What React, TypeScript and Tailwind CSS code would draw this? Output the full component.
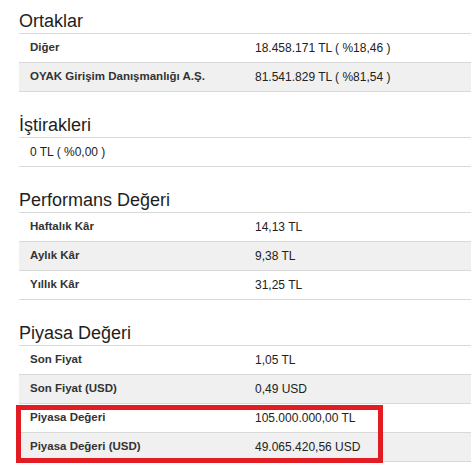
const sections: { title: string; rows: [string, string][]; single?: string }[] = [
  {
    title: 'Ortaklar',
    rows: [
      ['Diğer', '18.458.171 TL ( %18,46 )'],
      ['OYAK Girişim Danışmanlığı A.Ş.', '81.541.829 TL ( %81,54 )'],
    ],
  },
  { title: 'İştirakleri', rows: [], single: '0 TL ( %0,00 )' },
  {
    title: 'Performans Değeri',
    rows: [
      ['Haftalık Kâr', '14,13 TL'],
      ['Aylık Kâr', '9,38 TL'],
      ['Yıllık Kâr', '31,25 TL'],
    ],
  },
  {
    title: 'Piyasa Değeri',
    rows: [
      ['Son Fiyat', '1,05 TL'],
      ['Son Fiyat (USD)', '0,49 USD'],
      ['Piyasa Değeri', '105.000.000,00 TL'],
      ['Piyasa Değeri (USD)', '49.065.420,56 USD'],
    ],
  },
]

export default function App() {
  return (
    <div
      className="relative min-h-[476px] w-[471px] overflow-hidden bg-white pl-[19px] pt-[10px] text-[#222]"
      style={{ fontFamily: '"Liberation Sans", Arial, sans-serif' }}
    >
      <div className="flex flex-col gap-[22px]">
        {sections.map((s) => (
          <section key={s.title}>
            {/* Heading */}
            <h2 className="border-b border-[#d9d9d9] pb-[1px] text-[18px] leading-[22px] font-normal text-[#1e1e1e]">
              {s.title}
            </h2>

            {s.single && (
              <div className="flex h-[29px] items-center border-b border-[#d9d9d9] pl-[11px] text-[12px] text-[#222]">
                {s.single}
              </div>
            )}

            {s.rows.map(([label, value], i) => (
              <div
                key={label}
                className={`grid h-[29px] grid-cols-[236px_1fr] items-center border-b border-[#d9d9d9] text-[12px] ${
                  i % 2 === 1 ? 'bg-[#f0f0f0]' : 'bg-white'
                }`}
              >
                <span className="pl-[11px] text-[11.5px] font-bold text-[#333]">{label}</span>
                <span className="text-[#222]">{value}</span>
              </div>
            ))}
          </section>
        ))}
      </div>

      {/* Highlight annotation */}
      <div className="pointer-events-none absolute top-[405px] left-[16px] h-[58px] w-[367px] border-[5px] border-[#e31b23]" />
    </div>
  )
}
